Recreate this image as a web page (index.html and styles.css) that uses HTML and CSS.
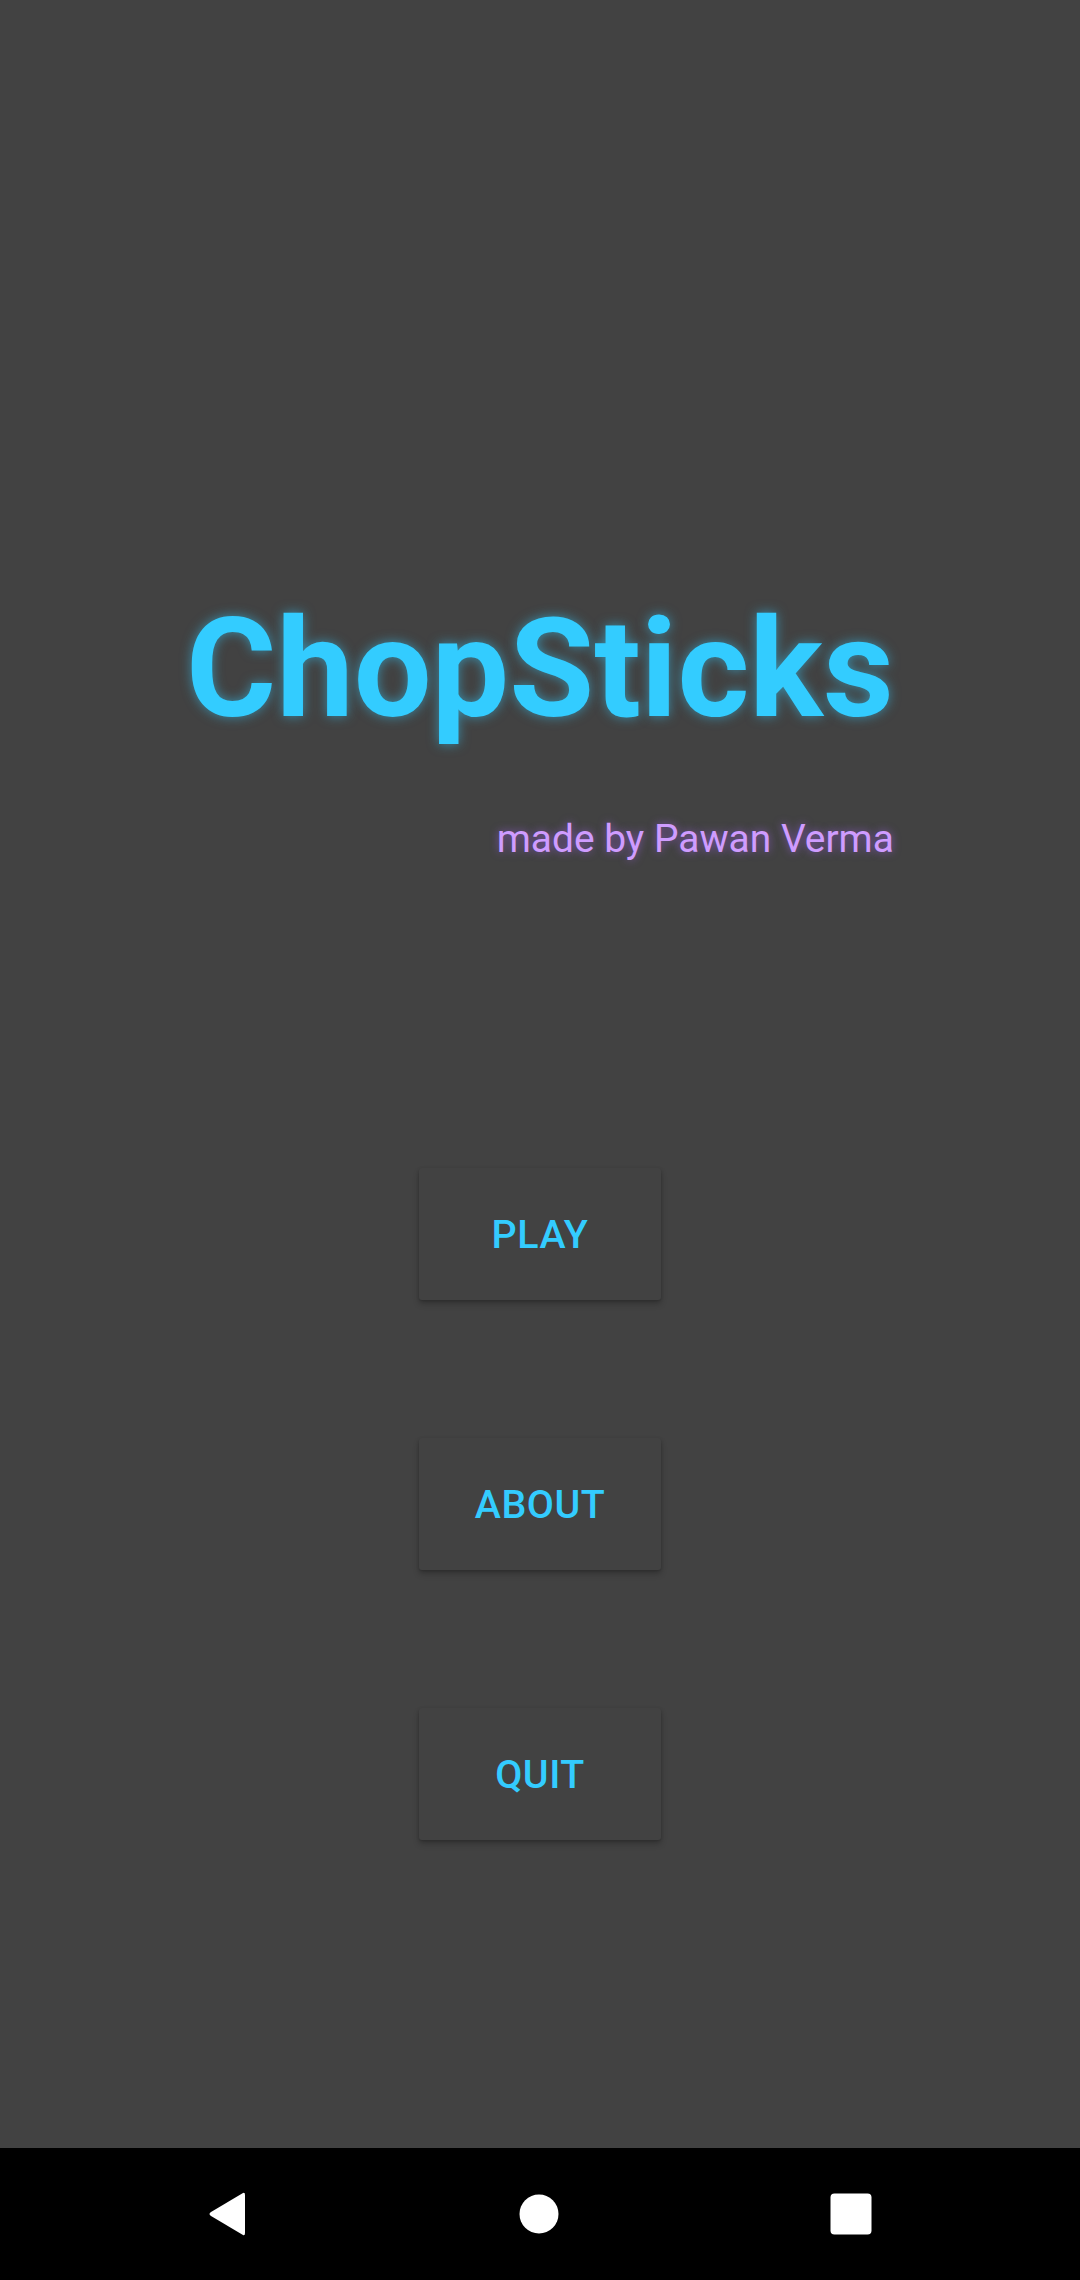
FILE: index.html
```html
<!DOCTYPE html>
<html>
<head>
<meta charset="utf-8">
<link rel="stylesheet" href="styles.css">
</head>
<body>
<div class="screen">
  <main class="content">
    <div class="brand">
      <h1 class="title">ChopSticks</h1>
      <p class="byline">made by Pawan Verma</p>
    </div>
    <div class="menu">
      <button class="btn">PLAY</button>
      <button class="btn">ABOUT</button>
      <button class="btn">QUIT</button>
    </div>
  </main>
  <nav class="navbar">
    <svg class="nav-icon" width="40" height="46" viewBox="0 0 40 46"><path d="M36 2 Q38 1 38 4 L38 42 Q38 45 36 44 L4 25 Q1 23 4 21 Z" fill="#fff"/></svg>
    <svg class="nav-icon" width="40" height="40" viewBox="0 0 40 40"><circle cx="20" cy="20" r="19.5" fill="#fff"/></svg>
    <svg class="nav-icon" width="42" height="42" viewBox="0 0 42 42"><rect x="0.5" y="0.5" width="41" height="41" rx="4" fill="#fff"/></svg>
  </nav>
</div>
</body>
</html>
```
FILE: styles.css
```css
* { box-sizing: border-box; }
html, body { margin: 0; padding: 0; }
body {
  width: 1080px;
  height: 2280px;
  background: #424242;
  font-family: Roboto, "Noto Sans", sans-serif;
  overflow: hidden;
}
.screen {
  display: flex;
  flex-direction: column;
  height: 2280px;
}
.content {
  flex: 1;
  display: flex;
  flex-direction: column;
  align-items: center;
  padding-top: 586px;
}
.brand {
  display: flex;
  flex-direction: column;
  align-items: flex-end;
}
.title {
  margin: 0;
  font-size: 138px;
  font-weight: 700;
  line-height: 166px;
  color: #33ccff;
  text-shadow: 0 0 12px rgba(51, 204, 255, 0.55);
}
.byline {
  margin: 64px 0 0 0;
  font-size: 38.9px;
  line-height: 46px;
  color: #cf9cff;
  text-shadow: 0 0 8px rgba(170, 100, 255, 0.6);
}
.menu {
  margin-top: 306px;
  display: flex;
  flex-direction: column;
  gap: 138px;
  align-items: center;
}
.btn {
  width: 242px;
  height: 132px;
  background: #424242;
  border: none;
  border-radius: 3px;
  box-shadow: 0 4px 6px rgba(0, 0, 0, 0.22), 0 1px 3px rgba(0, 0, 0, 0.18);
  color: #33ccff;
  font-family: Roboto, "Noto Sans", sans-serif;
  font-weight: 500;
  font-size: 39.4px;
  letter-spacing: 0.5px;
  padding: 0;
}
.navbar {
  height: 132px;
  background: #000;
  display: flex;
  align-items: center;
  justify-content: space-between;
  padding: 0 208px 0 207px;
}
.nav-icon { display: block; }
```
